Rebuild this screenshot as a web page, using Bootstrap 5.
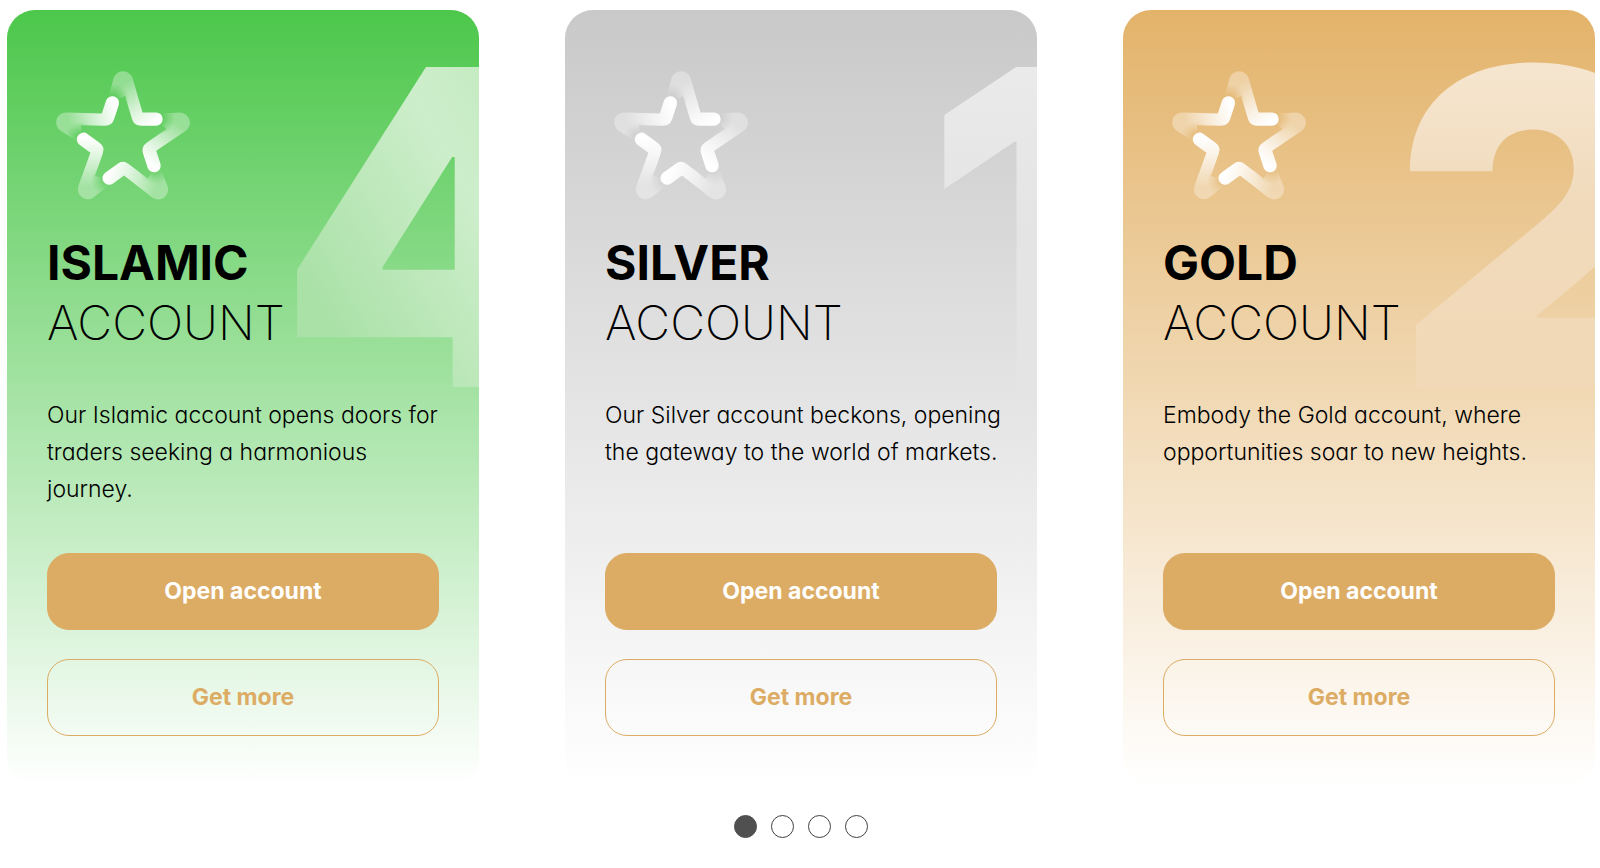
<!DOCTYPE html>
<html lang="en">
<head>
<meta charset="utf-8">
<meta name="viewport" content="width=device-width, initial-scale=1">
<title>Account types</title>
<link href="https://cdn.jsdelivr.net/npm/bootstrap@5.3.0/dist/css/bootstrap.min.css" rel="stylesheet">
<style>
  body { font-family: Inter, "Open Sans", sans-serif; font-feature-settings: "cv11"; color: #000; background: #fff; }
  .account-grid { display: grid; grid-template-columns: repeat(3, minmax(0, 1fr)); gap: 86px; padding: 10px 5px 0 7px; }
  .account-card { border: 0; border-radius: 28px; padding: 58px 40px 50px; overflow: hidden; background: linear-gradient(var(--tone), #fff); }
  .tone-islamic { --tone: #4cc74b; --digit: linear-gradient(60deg, #a9e1a6 20%, #cdeecb 60%, #c2eabf 80%); --digit-left: 272px; }
  .tone-silver { --tone: #c9c9c9; --digit: linear-gradient(#eaeaea 15%, #e4e4e4 50%, #e4e4e4); --digit-left: 360px; }
  .tone-gold { --tone: #e3b36a; --digit: linear-gradient(#f5e5ce 15%, #f1dabb 45%, #f1d9b7 85%); --digit-left: 272px; }
  .rank { position: absolute; top: 0; left: var(--digit-left); font-size: 440px; font-weight: 900; line-height: 434px; color: transparent; background: var(--digit); -webkit-background-clip: text; background-clip: text; user-select: none; }
  .star { width: 136px; height: 136px; }
  .account-title { font-size: 48px; line-height: 60px; font-weight: 250; margin: 29px 0 44px; }
  .account-title strong { font-weight: 700; }
  .account-text { font-size: 23px; line-height: 37px; font-weight: 300; min-height: 111px; margin: 0 -8px 45px 0; }
  .account-btn { --bs-btn-font-size: 23px; --bs-btn-font-weight: 700; --bs-btn-border-radius: 22px; --bs-btn-border-width: 1px; --bs-btn-border-color: #dcac65; --bs-btn-line-height: 33px; --bs-btn-padding-y: 21px; }
  .account-btn.filled { --bs-btn-bg: #dcac65; --bs-btn-color: #fff; --bs-btn-hover-bg: #cf9d53; --bs-btn-hover-color: #fff; }
  .account-btn.outlined { --bs-btn-color: #dcac65; --bs-btn-hover-bg: #dcac65; --bs-btn-hover-color: #fff; }
  .buttons { gap: 29px; }
  .pager { gap: 14px; padding: 29px 0 20px 2px; }
  .pager button { width: 23px; height: 23px; padding: 0; border: 1px solid #404040; border-radius: 50%; background: #fff; }
  .pager button[aria-current] { background: #505050; border-color: #505050; }
  @media (max-width: 1200px) { .account-grid { grid-template-columns: 1fr; gap: 32px; } }
</style>
</head>
<body>
<svg width="0" height="0" class="position-absolute" aria-hidden="true">
  <defs>
    <linearGradient id="armFill" gradientUnits="userSpaceOnUse" x1="30" y1="-18" x2="2" y2="-58">
      <stop offset="0" stop-color="#fff"/>
      <stop offset=".35" stop-color="#fff" stop-opacity=".8"/>
      <stop offset="1" stop-color="#fff" stop-opacity=".33"/>
    </linearGradient>
    <radialGradient id="armFade" gradientUnits="userSpaceOnUse" cx="-10" cy="-41" r="16">
      <stop offset=".3" stop-color="#000"/>
      <stop offset=".6" stop-color="#000" stop-opacity=".55"/>
      <stop offset="1" stop-color="#000" stop-opacity="0"/>
    </radialGradient>
    <mask id="armMask" maskUnits="userSpaceOnUse" x="-30" y="-75" width="80" height="70">
      <rect x="-30" y="-75" width="80" height="70" fill="#fff"/>
      <circle cx="-10" cy="-41" r="16" fill="url(#armFade)"/>
    </mask>
    <filter id="soft" x="-10%" y="-10%" width="120%" height="120%"><feGaussianBlur stdDeviation=".7"/></filter>
    <g id="arm" mask="url(#armMask)">
      <path fill="url(#armFill)" d="M-9.7-62A10 10 0 0 1 9.7-62.5L19.5-28.6H33A6.7 6.7 0 0 1 33-15.2H18Q11-15.2 9-22L2-45Q-6-40-14-45Z"/>
    </g>
    <symbol id="starMark" viewBox="-68 -73 136 136">
      <g filter="url(#soft)">
        <use href="#arm"/>
        <use href="#arm" transform="rotate(72)"/>
        <use href="#arm" transform="rotate(144)"/>
        <use href="#arm" transform="rotate(216)"/>
        <use href="#arm" transform="rotate(288)"/>
      </g>
    </symbol>
  </defs>
</svg>

<main>
  <div class="account-grid">
    <article class="card account-card tone-islamic">
      <span class="rank">4</span>
      <div class="position-relative d-flex flex-column flex-grow-1">
        <svg class="star ms-2" aria-hidden="true"><use href="#starMark"/></svg>
        <h2 class="account-title"><strong>ISLAMIC</strong><br>ACCOUNT</h2>
        <p class="account-text">Our Islamic account opens doors for traders seeking a harmonious journey.</p>
        <div class="d-grid mt-auto buttons">
          <button type="button" class="btn account-btn filled">Open account</button>
          <button type="button" class="btn account-btn outlined">Get more</button>
        </div>
      </div>
    </article>
    <article class="card account-card tone-silver">
      <span class="rank">1</span>
      <div class="position-relative d-flex flex-column flex-grow-1">
        <svg class="star ms-2" aria-hidden="true"><use href="#starMark"/></svg>
        <h2 class="account-title"><strong>SILVER</strong><br>ACCOUNT</h2>
        <p class="account-text">Our Silver account beckons, opening the gateway to the world of markets.</p>
        <div class="d-grid mt-auto buttons">
          <button type="button" class="btn account-btn filled">Open account</button>
          <button type="button" class="btn account-btn outlined">Get more</button>
        </div>
      </div>
    </article>
    <article class="card account-card tone-gold">
      <span class="rank">2</span>
      <div class="position-relative d-flex flex-column flex-grow-1">
        <svg class="star ms-2" aria-hidden="true"><use href="#starMark"/></svg>
        <h2 class="account-title"><strong>GOLD</strong><br>ACCOUNT</h2>
        <p class="account-text">Embody the Gold account, where opportunities soar to new heights.</p>
        <div class="d-grid mt-auto buttons">
          <button type="button" class="btn account-btn filled">Open account</button>
          <button type="button" class="btn account-btn outlined">Get more</button>
        </div>
      </div>
    </article>
  </div>
  <nav class="pager d-flex justify-content-center" aria-label="Account slides">
    <button type="button" aria-label="Slide 1" aria-current="true"></button>
    <button type="button" aria-label="Slide 2"></button>
    <button type="button" aria-label="Slide 3"></button>
    <button type="button" aria-label="Slide 4"></button>
  </nav>
</main>
<script src="https://cdn.jsdelivr.net/npm/bootstrap@5.3.0/dist/js/bootstrap.bundle.min.js"></script>
</body>
</html>
